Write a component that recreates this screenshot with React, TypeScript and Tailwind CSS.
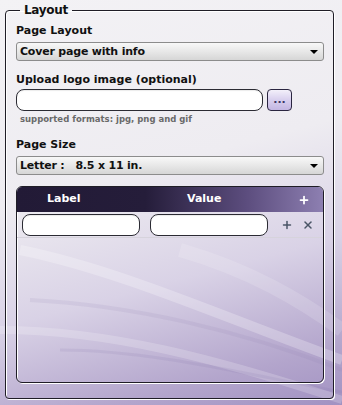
import { Plus, X } from "lucide-react";

const FONT = "font-['DejaVu_Sans',sans-serif]";

function Select({ children }: { children: React.ReactNode }) {
  return (
    <div className="flex h-[19px] items-center justify-between rounded-[3px] border border-[#8c8c8c] bg-[linear-gradient(#f8f8f8,#e6e6e6_55%,#d6d6d6)] pl-[3px] pr-[5px]">
      <span className="text-[11px] font-bold leading-none tracking-[-0.2px] text-[#111]">{children}</span>
      <span className="h-0 w-0 border-x-[4px] border-t-[4px] border-x-transparent border-t-black" />
    </div>
  );
}

function Field({ className }: { className: string }) {
  return (
    <div
      className={`h-[22px] rounded-[8px] border border-[#2b2b33] bg-white shadow-[inset_0_1px_1px_rgba(0,0,0,0.08)] ${className}`}
    />
  );
}

export default function App() {
  return (
    <div
      className={`relative h-[405px] w-[342px] overflow-hidden bg-[linear-gradient(165deg,#f3f2f5_0%,#eeecf1_42%,#d9d2e6_66%,#b3a5cc_88%,#a292c2_100%)] ${FONT}`}
    >
      {/* background streaks */}
      <svg className="absolute inset-0" width="342" height="405" viewBox="0 0 342 405">
        <path d="M20 250 C 120 270, 230 320, 342 360" stroke="#ffffff" strokeOpacity="0.25" strokeWidth="10" fill="none" />
        <path d="M30 300 C 130 305, 240 330, 342 370" stroke="#8a78b0" strokeOpacity="0.12" strokeWidth="4" fill="none" />
        <path d="M0 330 C 110 330, 220 360, 342 400" stroke="#ffffff" strokeOpacity="0.2" strokeWidth="8" fill="none" />
        <path d="M60 350 C 150 350, 250 375, 342 392" stroke="#7d6aa8" strokeOpacity="0.12" strokeWidth="3" fill="none" />
        <path d="M180 250 C 250 270, 300 300, 342 330" stroke="#ffffff" strokeOpacity="0.15" strokeWidth="14" fill="none" />
      </svg>

      <fieldset className="relative ml-[5px] mt-[3px] h-[396px] w-[329px] rounded-[4px] border border-[#1f1d26] pb-[14px] pl-[10px] pr-[9px] shadow-[1px_1px_0_#fff,inset_1px_1px_0_#fff]">
        <legend className="ml-[4px] px-[4px] text-[12px] font-bold leading-[14px] tracking-[-0.3px] text-[#111]">Layout</legend>

        <div className="mt-[6px] h-[15px] text-[11px] font-bold leading-[15px] text-[#111]">Page Layout</div>
        <div className="mt-[4px]">
          <Select>Cover page with info</Select>
        </div>

        <div className="mt-[11px] h-[15px] text-[11px] font-bold leading-[15px] text-[#111]">
          Upload logo image (optional)
        </div>
        <div className="mt-[2px] flex items-center gap-[4px]">
          <Field className="w-[247px]" />
          <button
            type="button"
            className="flex h-[22px] w-[25px] items-center justify-center rounded-[4px] border border-[#2a2540] bg-[linear-gradient(#f3f0fa,#d8cfee_50%,#c3b6e2)] pb-[2px] text-[11px] font-bold leading-none text-[#3d3466]"
          >
            ...
          </button>
        </div>
        <div className="mt-[2px] h-[12px] pl-[4px] text-[8.5px] font-bold leading-[12px] text-[#6a6a6a]">
          supported formats: jpg, png and gif
        </div>

        <div className="mt-[12px] h-[15px] text-[11px] font-bold leading-[15px] text-[#111]">Page Size</div>
        <div className="mt-[4px]">
          <Select>
            <span className="whitespace-pre">Letter :   8.5 x 11 in.</span>
          </Select>
        </div>

        <div className="mt-[11px] h-[197px] overflow-hidden rounded-[6px] border border-[#1f1d26] shadow-[1px_1px_0_#fff,inset_1px_1px_0_#fff]">
          <div className="flex h-[25px] items-center bg-[linear-gradient(90deg,#221a36_0%,#251d3a_42%,#5c4d7e_75%,#8d7fb1_100%)] text-[11px] font-bold text-white">
            <span className="ml-[30px] w-[140px]">Label</span>
            <span className="w-[106px]">Value</span>
            <Plus className="ml-[5px]" size={12} strokeWidth={3.5} />
          </div>
          <div className="flex h-[26px] items-center border-b border-[#d6d3dc] pl-[5px]">
            <Field className="w-[118px]" />
            <Field className="ml-[10px] w-[118px]" />
            <Plus className="ml-[13px] text-[#4a5566]" size={12} strokeWidth={3} />
            <X className="ml-[9px] text-[#4a5566]" size={12} strokeWidth={3} />
          </div>
        </div>
      </fieldset>
    </div>
  );
}
